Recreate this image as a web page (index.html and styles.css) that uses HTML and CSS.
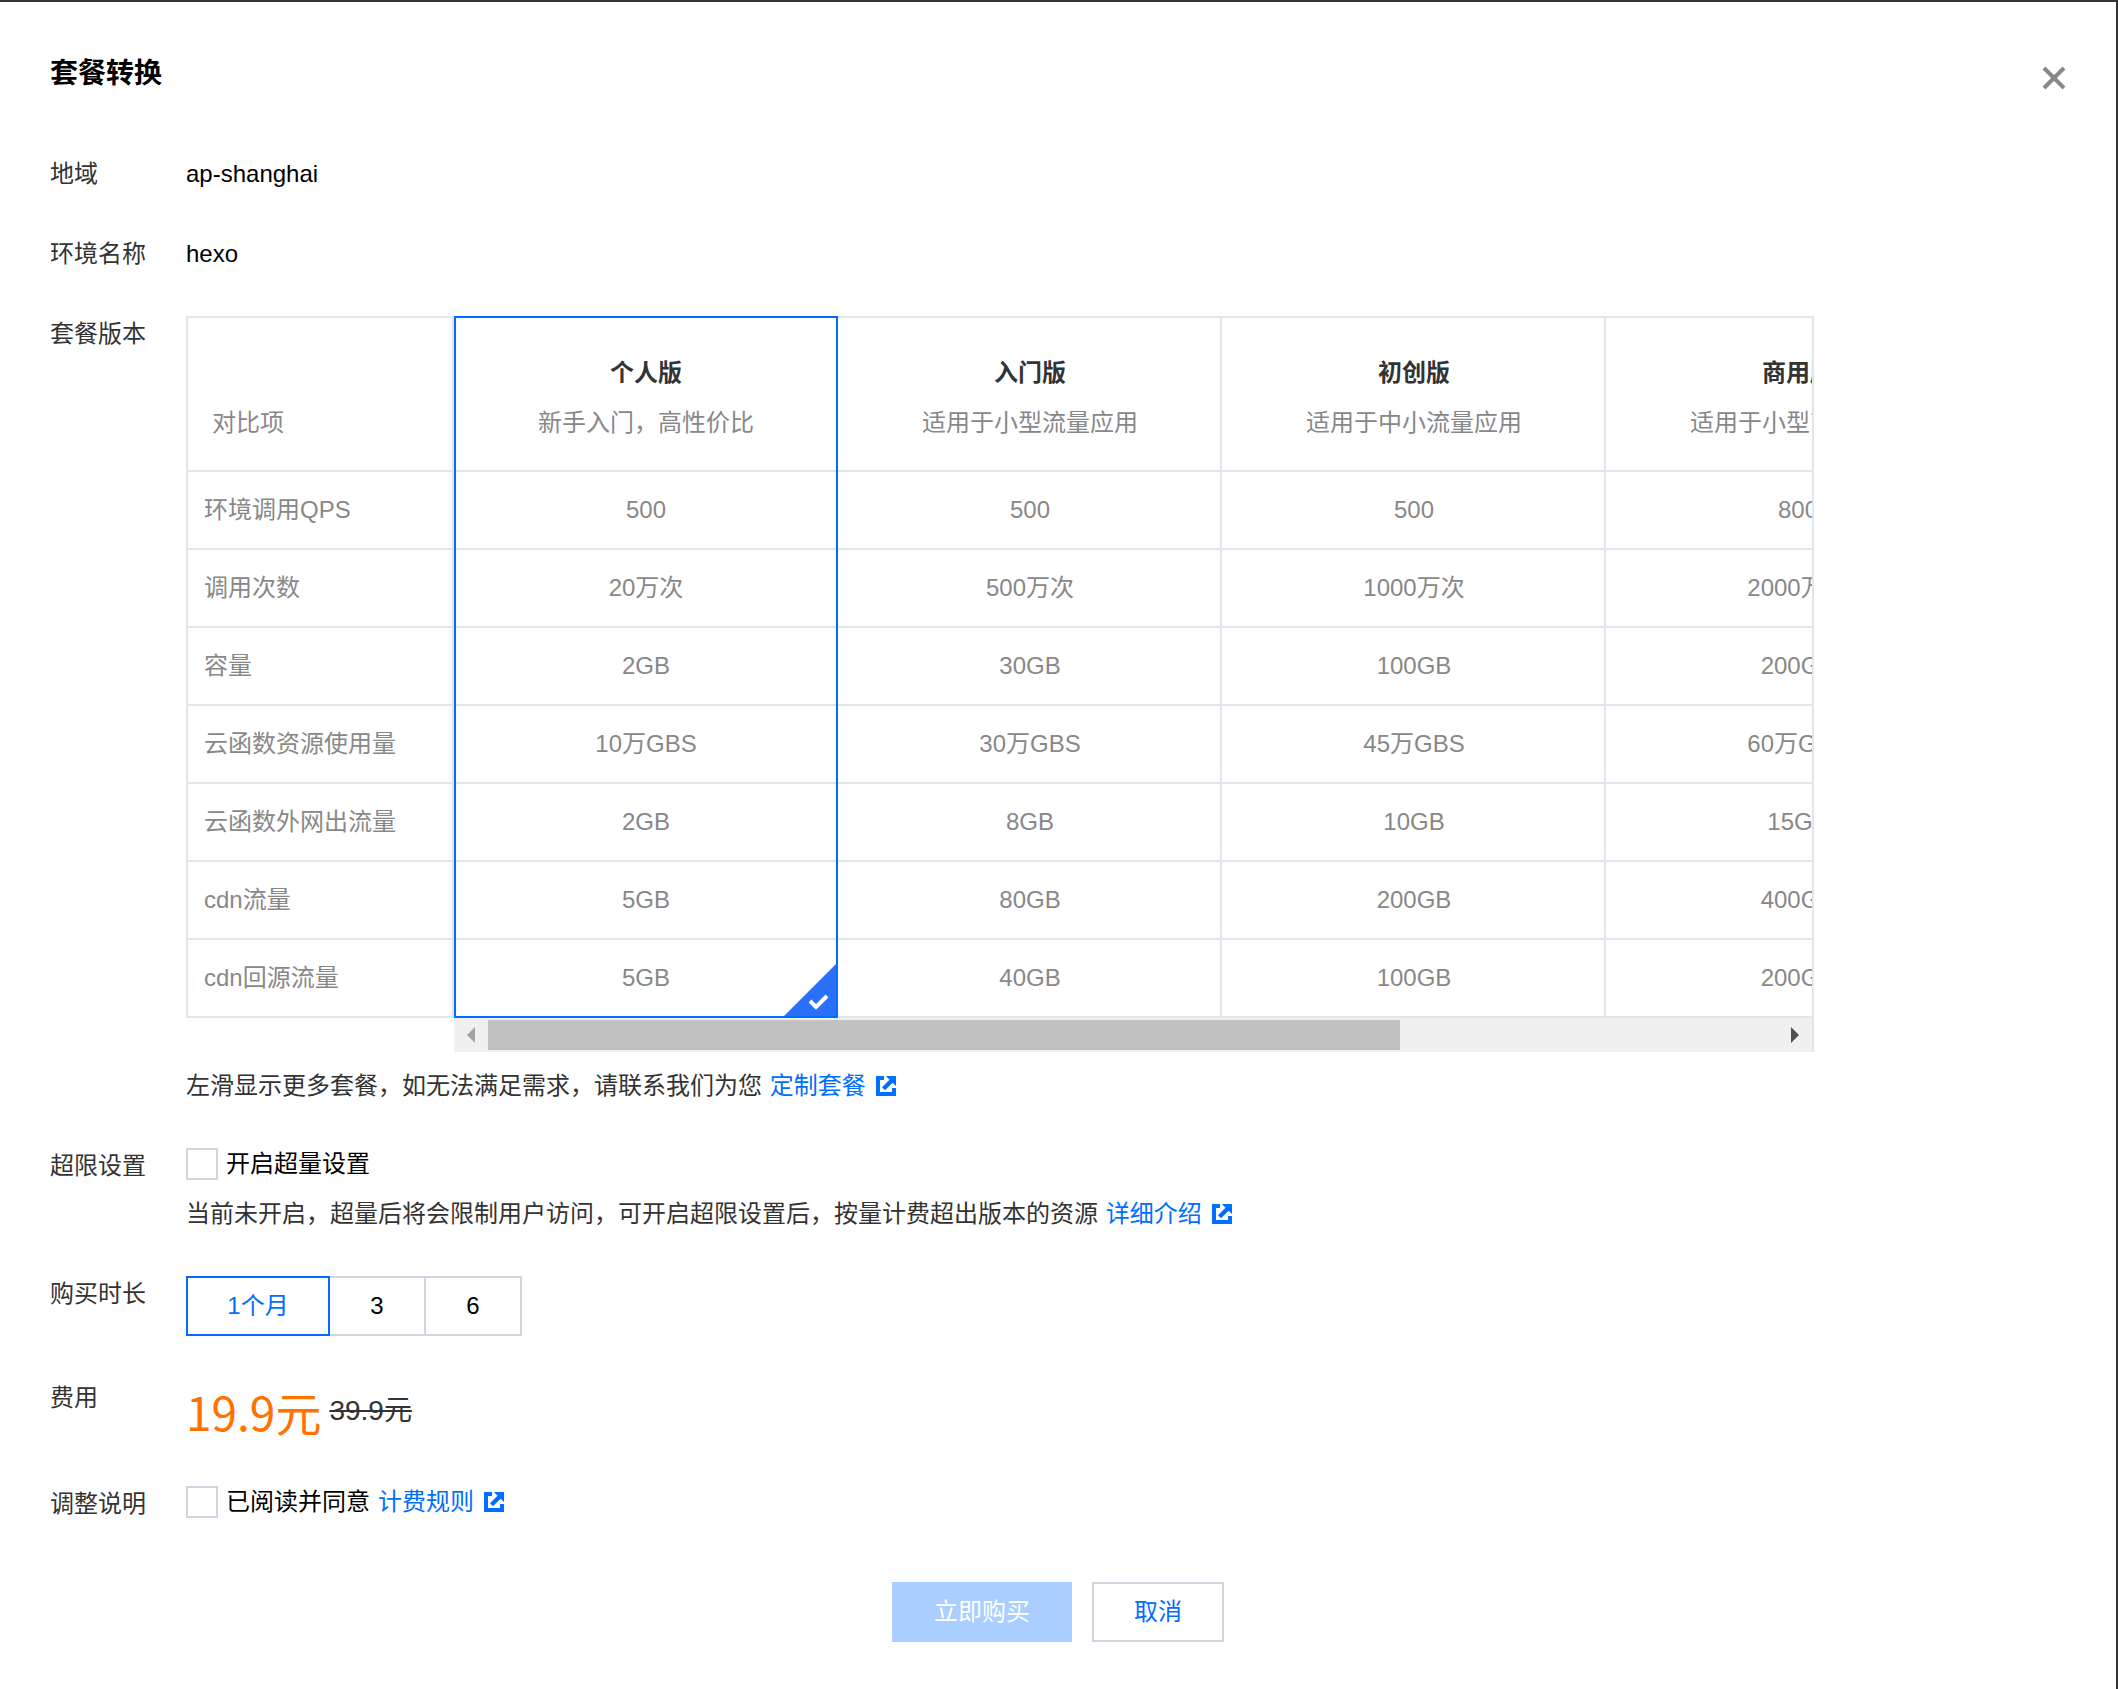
FILE: index.html
```html
<!DOCTYPE html>
<html lang="zh-CN">
<head>
<meta charset="utf-8">
<meta name="viewport" content="width=device-width, initial-scale=1">
<title>套餐转换</title>
<link rel="stylesheet" href="styles.css">
</head>
<body>
<svg width="0" height="0" class="sprite" aria-hidden="true">
  <symbol id="external" viewBox="0 0 20 20">
    <path fill="currentColor" d="M0 0H8V4H4V16H16V12H20V20H0ZM10 0H20V10L16.600 6.800 9 14.300 6 11.300 13.500 3.800Z"/>
  </symbol>
</svg>
<main class="dialog">
  <header class="dialog-head">
    <h1 class="title">套餐转换</h1>
    <button class="close" type="button" aria-label="关闭">
      <svg width="24" height="24" viewBox="0 0 24 24" aria-hidden="true"><path d="M2 2 22 22M22 2 2 22" stroke="#888" stroke-width="4" fill="none"/></svg>
    </button>
  </header>

  <form class="form">
    <div class="row">
      <div class="label">地域</div>
      <div class="value">ap-shanghai</div>
    </div>
    <div class="row">
      <div class="label">环境名称</div>
      <div class="value">hexo</div>
    </div>
    <div class="row">
      <div class="label">套餐版本</div>
      <div class="value">
        <div class="plans">
          <div class="plans-view">
            <table class="plan-table">
              <colgroup><col class="col-item"><col class="col-plan"><col class="col-plan"><col class="col-plan"><col class="col-plan"></colgroup>
              <thead>
                <tr>
                  <th scope="col" class="corner">对比项</th>
                  <th scope="col" class="picked"><span class="plan-name">个人版</span><span class="plan-desc">新手入门，高性价比</span></th>
                  <th scope="col"><span class="plan-name">入门版</span><span class="plan-desc">适用于小型流量应用</span></th>
                  <th scope="col"><span class="plan-name">初创版</span><span class="plan-desc">适用于中小流量应用</span></th>
                  <th scope="col"><span class="plan-name">商用版</span><span class="plan-desc">适用于小型商业应用</span></th>
                </tr>
              </thead>
              <tbody>
                <tr><th scope="row">环境调用QPS</th><td class="picked">500</td><td>500</td><td>500</td><td>800</td></tr>
                <tr><th scope="row">调用次数</th><td class="picked">20万次</td><td>500万次</td><td>1000万次</td><td>2000万次</td></tr>
                <tr><th scope="row">容量</th><td class="picked">2GB</td><td>30GB</td><td>100GB</td><td>200GB</td></tr>
                <tr><th scope="row">云函数资源使用量</th><td class="picked">10万GBS</td><td>30万GBS</td><td>45万GBS</td><td>60万GBS</td></tr>
                <tr><th scope="row">云函数外网出流量</th><td class="picked">2GB</td><td>8GB</td><td>10GB</td><td>15GB</td></tr>
                <tr><th scope="row">cdn流量</th><td class="picked">5GB</td><td>80GB</td><td>200GB</td><td>400GB</td></tr>
                <tr><th scope="row">cdn回源流量</th><td class="picked">5GB<svg class="corner-check" viewBox="0 0 52 52" aria-hidden="true"><path d="M52 0V52H0Z" fill="#2b70fa"/><path d="M26 37 32 43 43 32" fill="none" stroke="#fff" stroke-width="4"/></svg></td><td>40GB</td><td>100GB</td><td>200GB</td></tr>
              </tbody>
            </table>
          </div>
          <div class="scrollbar" aria-hidden="true">
            <span class="arrow"><svg width="8" height="16" viewBox="0 0 8 16"><path d="M8 0V16L0 8Z" fill="#a3a3a3"/></svg></span>
            <span class="track"><span class="thumb"></span></span>
            <span class="arrow"><svg width="8" height="16" viewBox="0 0 8 16"><path d="M0 0V16L8 8Z" fill="#505050"/></svg></span>
          </div>
        </div>
        <p class="hint">左滑显示更多套餐，如无法满足需求，请联系我们为您 <a class="link" href="#custom">定制套餐<svg class="ext" aria-hidden="true"><use href="#external"/></svg></a></p>
      </div>
    </div>
    <div class="row">
      <div class="label">超限设置</div>
      <div class="value">
        <div class="check-line"><input class="check" type="checkbox" id="over"><label for="over">开启超量设置</label></div>
        <p class="hint">当前未开启，超量后将会限制用户访问，可开启超限设置后，按量计费超出版本的资源 <a class="link" href="#detail">详细介绍<svg class="ext" aria-hidden="true"><use href="#external"/></svg></a></p>
      </div>
    </div>
    <div class="row">
      <div class="label">购买时长</div>
      <div class="value segments">
        <button class="segment segment-on" type="button">1个月</button>
        <button class="segment" type="button">3</button>
        <button class="segment" type="button">6</button>
      </div>
    </div>
    <div class="row">
      <div class="label">费用</div>
      <div class="value cost"><strong class="price">19.9元</strong><del class="old-price">39.9元</del></div>
    </div>
    <div class="row">
      <div class="label">调整说明</div>
      <div class="value check-line"><input class="check" type="checkbox" id="agree"><label for="agree">已阅读并同意</label><a class="link" href="#rules">计费规则<svg class="ext" aria-hidden="true"><use href="#external"/></svg></a></div>
    </div>
    <div class="actions">
      <button class="btn btn-primary" type="button" disabled>立即购买</button>
      <button class="btn btn-plain" type="button">取消</button>
    </div>
  </form>
</main>
</body>
</html>
```
FILE: styles.css
```css
* { box-sizing: border-box; }

body {
  margin: 0;
  background: #333;
  color: #000;
  font: 24px/36px "Liberation Sans", "Noto Sans CJK SC", sans-serif;
}

button, input { font: inherit; margin: 0; }
p, h1 { margin: 0; }
.sprite { display: block; }

.dialog {
  min-height: 100vh;
  padding: 52px 50px 44px;
  border-top: 2px solid #333;
  border-right: 2px solid #333;
  background: #fff;
}

.dialog-head {
  display: flex;
  justify-content: space-between;
  align-items: start;
  margin-bottom: 62px;
}
.title { font-size: 28px; line-height: 40px; }
.close {
  display: flex;
  align-items: end;
  width: 24px;
  height: 36px;
  padding: 0;
  border: 0;
  background: none;
}

.form { display: flex; flex-direction: column; gap: 44px; }
.row { display: grid; grid-template-columns: 136px minmax(0, 1fr); }
.label { color: #333; }

.plans {
  max-width: 1628px;
  border-right: 2px solid #e1e6ed;
}
.plans-view { overflow: hidden; }
.plan-table {
  width: 1804px;
  table-layout: fixed;
  border-collapse: separate;
  border-spacing: 0;
  color: #888;
}
.col-item { width: 268px; }
.col-plan { width: 384px; }

.plan-table th, .plan-table td {
  height: 78px;
  padding: 0 0 0 2px;
  border: 0 solid #e1e6ed;
  border-right-width: 2px;
  border-bottom-width: 2px;
  font-weight: 400;
  text-align: center;
}
.plan-table thead th {
  height: 156px;
  padding-bottom: 22px;
  border-top-width: 2px;
  vertical-align: bottom;
}
.plan-table tbody th {
  padding-left: 16px;
  border-left-width: 2px;
  text-align: left;
}
.plan-table thead .corner {
  padding-left: 24px;
  border-left-width: 2px;
  text-align: left;
  line-height: 50px;
}
.plan-name, .plan-desc { display: block; line-height: 50px; }
.plan-name { color: #333; font-weight: 700; }

/* The blue frame of the chosen plan runs unbroken over the row lines. */
.plan-table .picked {
  position: relative;
  padding-left: 0;
  border-left-width: 2px;
}
.picked::after {
  content: "";
  position: absolute;
  inset: 0 -2px -2px;
  border: 0 solid #006eff;
  border-width: 0 2px;
  pointer-events: none;
}
thead .picked::after { top: -2px; border-top-width: 2px; }
tr:last-child td.picked::after { border-bottom-width: 2px; }
.corner-check {
  position: absolute;
  right: 0;
  bottom: 0;
  width: 52px;
  height: 52px;
}

.scrollbar {
  display: flex;
  align-items: center;
  height: 34px;
  margin-left: 268px;
  background: #f0f0f0;
}
.arrow { display: flex; justify-content: center; width: 34px; }
.track { flex: 1; }
.thumb { display: block; width: 70.7%; height: 30px; background: #c1c1c1; }

.hint { margin-top: 16px; color: #333; }

.link { color: #006eff; text-decoration: none; }
.hint .link { margin-left: 1px; }
.ext { width: 20px; height: 20px; margin-left: 10px; vertical-align: -2px; }

.check-line { display: flex; align-items: center; gap: 8px; height: 32px; }
.check {
  appearance: none;
  width: 32px;
  height: 32px;
  border: 2px solid #cfd5de;
  background: #fff;
}

.segments { display: flex; }
.segment {
  width: 96px;
  height: 60px;
  padding: 0;
  border: 2px solid #cfd5de;
  border-left-width: 0;
  background: #fff;
  color: #000;
}
.segment-on { width: 144px; border: 2px solid #006eff; color: #006eff; }

.cost { display: flex; align-items: center; gap: 8px; height: 62px; }
.price {
  color: #ff7200;
  font: 400 46px/62px "Noto Sans CJK SC", sans-serif;
}
.old-price { font-size: 28px; color: #333; }

.actions { display: flex; justify-content: center; gap: 20px; padding-top: 16px; }
.btn { height: 60px; padding: 0; border: 2px solid #cfd5de; background: #fff; color: #006eff; }
.btn-primary { width: 180px; border-color: #a9ceff; background: #a9ceff; color: #fff; }
.btn-plain { width: 132px; }
```
